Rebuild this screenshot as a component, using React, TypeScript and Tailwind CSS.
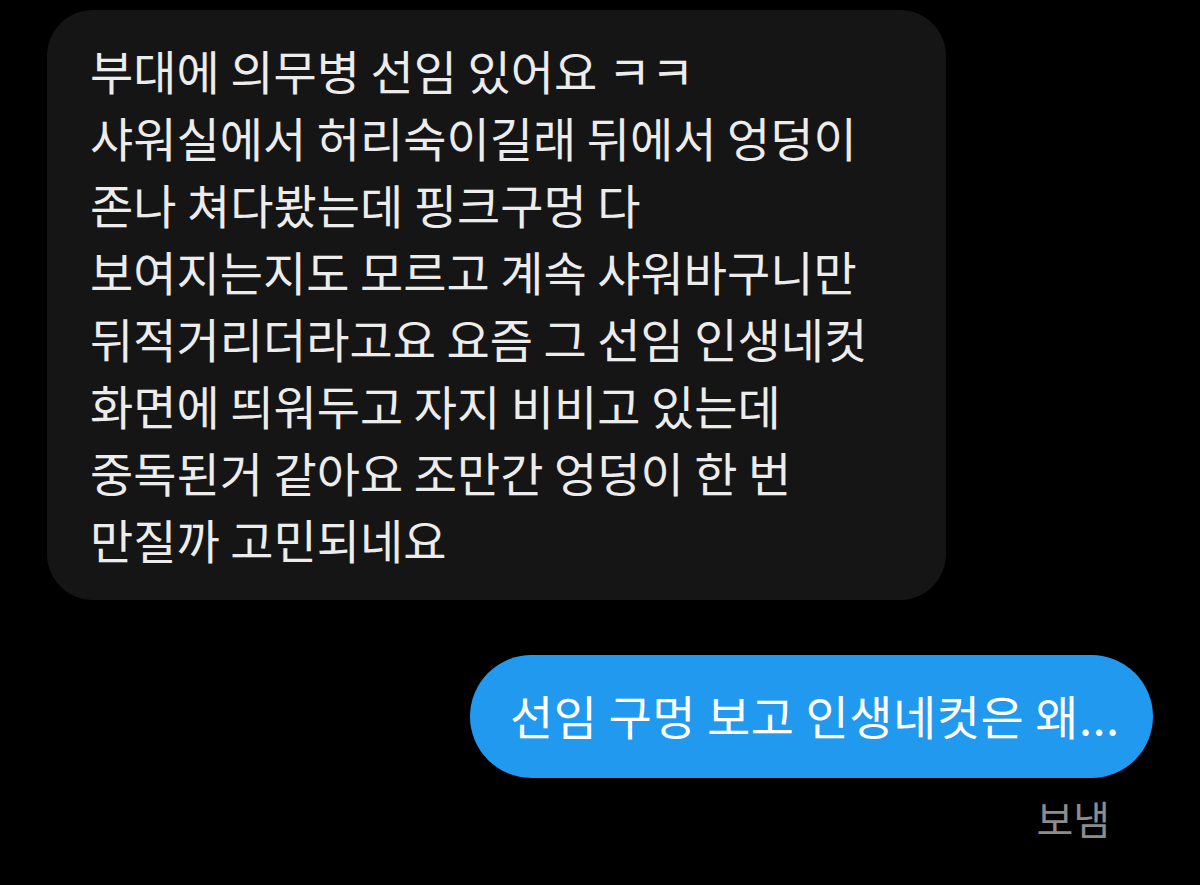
import React from "react";

const lines = [
  "부대에 의무병 선임 있어요 ㅋㅋ",
  "샤워실에서 허리숙이길래 뒤에서 엉덩이",
  "존나 쳐다봤는데 핑크구멍 다",
  "보여지는지도 모르고 계속 샤워바구니만",
  "뒤적거리더라고요 요즘 그 선임 인생네컷",
  "화면에 띄워두고 자지 비비고 있는데",
  "중독된거 같아요 조만간 엉덩이 한 번",
  "만질까 고민되네요",
];

export default function App() {
  return (
    <div
      className="w-[1200px] h-[885px] bg-black overflow-hidden flex flex-col"
      style={{ fontFamily: '"Noto Sans CJK KR", "Noto Sans", sans-serif' }}
    >
      <div className="pl-[47px] pt-[10px]">
        <div className="w-[899px] h-[590px] bg-[#151515] rounded-[46px] pl-[43px] pt-[26px]">
          {lines.map((l, i) => (
            <div
              key={i}
              className="text-[47px] leading-[67px] text-[#ececec] whitespace-nowrap"
            >
              {l}
            </div>
          ))}
        </div>
      </div>
      <div className="flex justify-end pr-[47px] pt-[55px]">
        <div className="w-[683px] h-[123px] bg-[#2199ee] rounded-full flex items-center pl-[40px]">
          <span className="text-[47px] text-white whitespace-nowrap leading-none tracking-[0.5px] -mt-[4px]">
            선임 구멍 보고 인생네컷은 왜...
          </span>
        </div>
      </div>
      <div className="flex justify-end pr-[90px] pt-[20px]">
        <span className="text-[40px] text-[#8c8c8c] leading-none">보냄</span>
      </div>
    </div>
  );
}
